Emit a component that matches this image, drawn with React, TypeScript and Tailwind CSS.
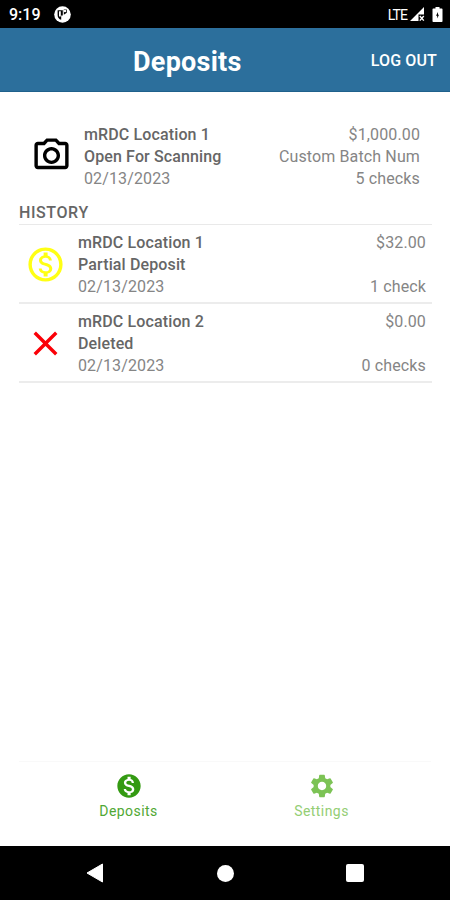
import {
  MdClose,
  MdMonetizationOn,
  MdOutlineCameraAlt,
  MdOutlineMonetizationOn,
  MdSettings,
} from "react-icons/md";

type Deposit = {
  location: string;
  status: string;
  date: string;
  amount: string;
  batch?: string;
  checks: string;
};

const current: Deposit = {
  location: "mRDC Location 1",
  status: "Open For Scanning",
  date: "02/13/2023",
  amount: "$1,000.00",
  batch: "Custom Batch Num",
  checks: "5 checks",
};

const history: Deposit[] = [
  {
    location: "mRDC Location 1",
    status: "Partial Deposit",
    date: "02/13/2023",
    amount: "$32.00",
    checks: "1 check",
  },
  {
    location: "mRDC Location 2",
    status: "Deleted",
    date: "02/13/2023",
    amount: "$0.00",
    checks: "0 checks",
  },
];

function StatusIcon({ status }: { status: string }) {
  if (status === "Open For Scanning") return <MdOutlineCameraAlt size={41} className="mb-1 text-black" />;
  if (status === "Deleted") return <MdClose size={41} className="text-[#fb0007]" />;
  return <MdOutlineMonetizationOn size={41} className="text-[#ffff14]" />;
}

function DepositRow({ deposit }: { deposit: Deposit }) {
  return (
    <div className="flex w-full items-center text-base leading-[22px] text-[#858585]">
      <StatusIcon status={deposit.status} />
      <div className="ml-3 flex-1 tracking-[0.13px]">
        <p className="font-medium text-[#666666]">{deposit.location}</p>
        <p className="font-medium text-[#666666]">{deposit.status}</p>
        <p>{deposit.date}</p>
      </div>
      <div className="text-right tracking-[0.13px]">
        <p>{deposit.amount}</p>
        <p className="h-[22px]">{deposit.batch}</p>
        <p>{deposit.checks}</p>
      </div>
    </div>
  );
}

function StatusBar() {
  return (
    <div className="flex h-7 items-center justify-between bg-black pt-px pr-[7px] pl-[9px] text-white">
      <div className="flex items-center gap-[13px]">
        <span className="text-base leading-7 font-medium">9:19</span>
        <svg width="17" height="17" viewBox="0 0 17 17">
          <circle cx="8.5" cy="8.5" r="8.3" fill="#fff" />
          <path d="M3.6 4.2h5.2v5.2H7.2v4.4C4.9 13.2 3.6 11.4 3.6 9z" fill="#000" />
          <path d="M5 5.2h1.8v5.3H5z" fill="#fff" />
          <path d="M9.8 3.6h3v3.2L9.8 8.8z" fill="#000" />
          <circle cx="11" cy="5" r="1.2" fill="#fff" />
        </svg>
      </div>
      <div className="flex items-center">
        <span className="text-sm leading-7 tracking-[-0.9px]">LTE</span>
        <svg className="ml-[3px]" width="15" height="15" viewBox="0 0 15 15">
          <path d="M14 0v7.5H8.5V14H0z" fill="#fff" />
          <path d="M9.8 9l4 4.6M13.8 9l-4 4.6" stroke="#fff" strokeWidth="1.4" />
        </svg>
        <svg className="ml-[7px]" width="11" height="15" viewBox="0 0 11 15">
          <path d="M3.5 0h4v1.5h2.2c.5 0 .8.3.8.8v11.9c0 .5-.3.8-.8.8H1.3c-.5 0-.8-.3-.8-.8V2.3c0-.5.3-.8.8-.8h2.2z" fill="#fff" />
          <path d="M6 5L4 8.8h1.2v2.6L7 7.7H6z" fill="#000" />
        </svg>
      </div>
    </div>
  );
}

function TabBar() {
  return (
    <nav className="mx-[19px] flex h-[85px] border-t border-[#f9f9f9] pr-[13px] pl-[13px] pt-[10px] text-sm leading-[18px]">
      <button className="flex flex-1 flex-col items-center text-[#349a12]">
        <MdMonetizationOn size={28} />
        <span className="mt-0.5 tracking-[0.45px] text-[#50a834]">Deposits</span>
      </button>
      <button className="flex flex-1 flex-col items-center text-[#7cc355]">
        <MdSettings size={28} />
        <span className="mt-0.5 tracking-[0.45px] text-[#94ce74]">Settings</span>
      </button>
    </nav>
  );
}

function NavigationBar() {
  return (
    <div className="flex h-[54px] items-center justify-between bg-black px-[86px]">
      <svg width="18" height="20" viewBox="0 0 18 20">
        <path d="M16.5 1v18L1 10z" fill="#fff" stroke="#fff" strokeLinejoin="round" />
      </svg>
      <div className="size-[17px] rounded-full bg-white" />
      <div className="size-[18px] rounded-[2px] bg-white" />
    </div>
  );
}

export default function App() {
  return (
    <div className="flex h-[900px] w-[450px] flex-col bg-white font-[Roboto,sans-serif]">
      <StatusBar />

      <header className="flex h-16 items-center justify-between border-b border-[#1f618c] bg-[#2c6f9c] pt-[3px] pr-[13px] pl-[133px] text-white">
        <h1 className="pt-0.5 text-[27px] leading-8 font-bold tracking-[0.25px]">Deposits</h1>
        <button className="text-base font-medium tracking-[0.15px]">LOG OUT</button>
      </header>

      <main className="flex-1 pt-8 pr-[18px] pl-[19px]">
        <div className="px-3">
          <DepositRow deposit={current} />
        </div>
        <h2 className="mt-[13px] h-[22px] border-b border-[#e9e9e9] text-base leading-5 font-medium tracking-[0.6px] text-[#666666]">
          HISTORY
        </h2>
        {history.map((deposit) => (
          <div key={deposit.location} className="flex h-[79px] items-center border-b-2 border-[#ececec] pt-0.5 pr-1.5 pl-1.5">
            <DepositRow deposit={deposit} />
          </div>
        ))}
      </main>

      <TabBar />
      <NavigationBar />
    </div>
  );
}
